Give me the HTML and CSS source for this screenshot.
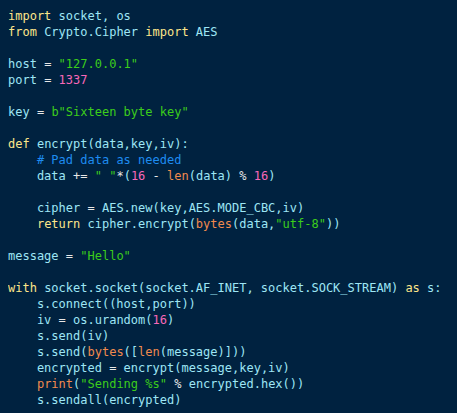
FILE: index.html
```html
<!DOCTYPE html>
<html>
<head>
<meta charset="utf-8">
<link rel="stylesheet" href="styles.css">
</head>
<body>
<pre class="code"><span class="k">import</span> socket, os
<span class="k">from</span> Crypto.Cipher <span class="k">import</span> AES

host <span class="o">=</span> <span class="s">"127.0.0.1"</span>
port <span class="o">=</span> <span class="n">1337</span>

key <span class="o">=</span> <span class="s">b"Sixteen byte key"</span>

<span class="k">def</span> encrypt(data,key,iv):
    <span class="c"># Pad data as needed</span>
    data <span class="o">+=</span> <span class="s">" "</span><span class="o">*</span>(<span class="n">16</span> <span class="o">-</span> <span class="b">len</span>(data) <span class="o">%</span> <span class="n">16</span>)

    cipher <span class="o">=</span> AES.new(key,AES.MODE_CBC,iv)
    <span class="k">return</span> cipher.encrypt(<span class="b">bytes</span>(data,<span class="s">"utf-8"</span>))

message <span class="o">=</span> <span class="s">"Hello"</span>

<span class="k">with</span> socket.socket(socket.AF_INET, socket.SOCK_STREAM) <span class="k">as</span> s:
    s.connect((host,port))
    iv <span class="o">=</span> os.urandom(<span class="n">16</span>)
    s.send(iv)
    s.send(<span class="b">bytes</span>([<span class="b">len</span>(message)]))
    encrypted <span class="o">=</span> encrypt(message,key,iv)
    <span class="b">print</span>(<span class="s">"Sending %s"</span> <span class="o">%</span> encrypted.hex())
    s.sendall(encrypted)</pre>
</body>
</html>
```
FILE: styles.css
```css
html {
  background: #002240;
}
body {
  margin: 8px;
  background: #002240;
}
.code {
  margin: 0;
  font-family: "DejaVu Sans Mono", monospace;
  font-size: 12px;
  line-height: 16px;
  color: #9ee6f5;
}
.k { color: #fde68a; }
.s { color: #3ccd1a; }
.n { color: #f868b8; }
.b { color: #f08a4e; }
.c { color: #1e8cf0; }
.o { color: #e8e8e8; }
```
